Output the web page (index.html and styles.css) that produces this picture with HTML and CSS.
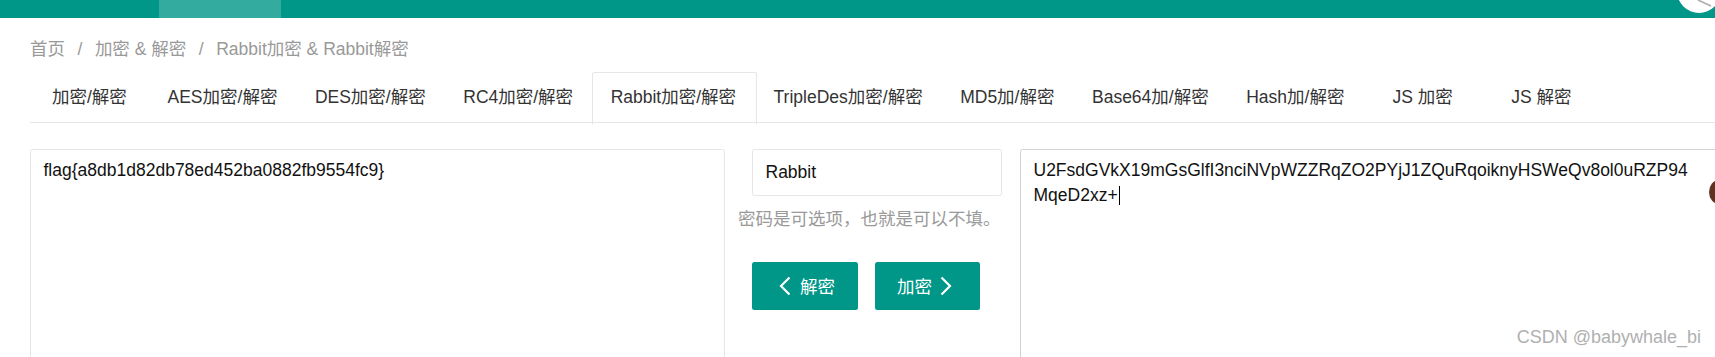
FILE: index.html
```html
<!DOCTYPE html>
<html lang="zh-CN">
<head>
  <meta charset="UTF-8" />
  <meta name="viewport" content="width=device-width, initial-scale=1.0"/>
  <title>Rabbit加密 &amp; Rabbit解密</title>
  <link rel="stylesheet" href="styles.css">
</head>
<body>

  <!-- Header (scrolled, only the bottom strip shows) -->
  <div class="header">
    <div class="nav">
      <a class="nav-item" href="#"></a>
      <a class="nav-item nav-this" href="#"></a>
    </div>
    <div class="avatar">
      <svg width="44" height="44" viewBox="0 0 44 44">
        <circle cx="22" cy="22" r="22" fill="#fff"/>
        <line x1="21" y1="31" x2="34" y2="37" stroke="#aaa" stroke-width="1.5"/>
      </svg>
    </div>
  </div>

  <div class="main">
    <div class="breadcrumb">
      <a href="#">首页</a><span class="sep">/</span><a href="#">加密 &amp; 解密</a><span class="sep">/</span><cite>Rabbit加密 &amp; Rabbit解密</cite>
    </div>

    <div class="tab">
      <ul class="tab-title">
        <li>加密/解密</li>
        <li>AES加密/解密</li>
        <li>DES加密/解密</li>
        <li>RC4加密/解密</li>
        <li class="tab-this">Rabbit加密/解密</li>
        <li>TripleDes加密/解密</li>
        <li>MD5加/解密</li>
        <li>Base64加/解密</li>
        <li>Hash加/解密</li>
        <li>JS 加密</li>
        <li>JS 解密</li>
      </ul>

      <div class="tab-content">
        <textarea class="textarea text-in">flag{a8db1d82db78ed452ba0882fb9554fc9}</textarea>

        <div class="middle">
          <input class="input" type="text" value="Rabbit" />
          <div class="hint">密码是可选项，也就是可以不填。</div>
          <div class="btns">
            <button type="button" class="btn">
              <svg class="ico" width="20" height="20" viewBox="0 0 20 20"><polyline points="14.5,1.5 6,10 14.5,18.5" fill="none" stroke="#fff" stroke-width="2.2"/></svg>解密
            </button>
            <button type="button" class="btn">
              加密<svg class="ico ico-right" width="20" height="20" viewBox="0 0 20 20"><polyline points="3.5,1.5 12,10 3.5,18.5" fill="none" stroke="#fff" stroke-width="2.2"/></svg>
            </button>
          </div>
        </div>

        <div class="textarea text-out">U2FsdGVkX19mGsGlfI3nciNVpWZZRqZO2PYjJ1ZQuRqoiknyHSWeQv8ol0uRZP94MqeD2xz+<span class="caret"></span></div>
      </div>
    </div>
  </div>

  <div class="pet"></div>
  <div class="watermark">CSDN @babywhale_bi</div>

</body>
</html>
```

FILE: styles.css
```css
* {
  box-sizing: border-box;
}

html, body {
  overflow: hidden;
}

body {
  margin: 0;
  height: 357px;
  background-color: #fff;
  color: #333;
  font-family: "Liberation Sans", "Noto Sans CJK SC", sans-serif;
  font-size: 17.5px;
  position: relative;
}

a {
  text-decoration: none;
}

/* header */
.header {
  height: 18px;
  background-color: #009688;
  position: relative;
}

.nav {
  display: flex;
  padding-left: 37px;
}

.nav-item {
  display: block;
  width: 122px;
  height: 18px;
}

.nav-this {
  background-color: rgba(255, 255, 255, 0.2);
}

.avatar {
  position: absolute;
  top: -31px;
  right: -6px;
  width: 44px;
  height: 44px;
}

.avatar svg {
  display: block;
}

/* page */
.main {
  padding-left: 30px;
}

.breadcrumb {
  margin: 20px 0 12px;
  height: 22px;
  line-height: 22px;
  color: #999;
  white-space: nowrap;
}

.breadcrumb a,
.breadcrumb cite {
  color: #999;
  font-style: normal;
}

.breadcrumb .sep {
  margin: 0 12.5px;
  color: #999;
}

/* tabs */
.tab-title {
  display: flex;
  margin: 0;
  padding: 0;
  list-style: none;
  height: 51px;
  border-bottom: 1px solid #e6e6e6;
  white-space: nowrap;
}

.tab-title li {
  box-sizing: content-box;
  position: relative;
  min-width: 81.25px;
  padding: 0 18.75px;
  height: 50px;
  line-height: 50px;
  text-align: center;
  color: #333;
  cursor: pointer;
}

.tab-title .tab-this:after {
  content: "";
  position: absolute;
  left: 0;
  top: 0;
  width: 100%;
  height: 51px;
  border: 1px solid #e6e6e6;
  border-bottom-color: #fff;
  border-radius: 2.5px 2.5px 0 0;
}

.tab-content {
  display: flex;
  align-items: flex-start;
  padding-top: 26px;
}

.textarea {
  flex-shrink: 0;
  height: 260px;
  border: 1px solid #e6e6e6;
  border-radius: 2.5px;
  padding: 7.5px 12.5px;
  font-family: "Liberation Sans", "Noto Sans CJK SC", sans-serif;
  font-size: 17.5px;
  line-height: 25px;
  color: #111;
  background-color: #fff;
  resize: none;
  outline: none;
}

.text-in {
  width: 695px;
  display: block;
  margin: 0;
}

.text-out {
  width: 708px;
  padding-right: 30px;
  border-color: #d2d2d2;
  overflow-wrap: anywhere;
}

.caret {
  display: inline-block;
  width: 1px;
  height: 19px;
  margin-left: 1px;
  background-color: #000;
  vertical-align: -4px;
}

/* middle column */
.middle {
  flex-shrink: 0;
  width: 295px;
}

.input {
  display: block;
  width: 250px;
  height: 47px;
  margin-left: 27px;
  padding: 0 12.5px;
  border: 1px solid #e6e6e6;
  border-radius: 2.5px;
  font-family: "Liberation Sans", "Noto Sans CJK SC", sans-serif;
  font-size: 17.5px;
  color: #111;
  outline: none;
}

.hint {
  margin: 11px 0 0 13px;
  line-height: 25px;
  color: #999;
  white-space: nowrap;
}

.btns {
  display: flex;
  gap: 17px;
  margin: 30px 0 0 27px;
}

.btn {
  display: inline-flex;
  align-items: center;
  height: 47.5px;
  padding: 0 22.5px;
  border: none;
  border-radius: 2.5px;
  background-color: #009688;
  color: #fff;
  font-family: "Liberation Sans", "Noto Sans CJK SC", sans-serif;
  font-size: 17.5px;
  cursor: pointer;
}

.ico {
  display: block;
  margin-right: 5.5px;
}

.ico-right {
  margin: 0 0 0 5.5px;
}

/* overlays */
.pet {
  position: absolute;
  top: 180px;
  right: -14px;
  width: 20px;
  height: 24px;
  border-radius: 50%;
  background-color: #5e3324;
}

.watermark {
  position: absolute;
  right: 14px;
  bottom: 10px;
  line-height: 20px;
  font-size: 18px;
  color: #b0b0b0;
  text-shadow: 0 0 1px #fff;
}
```
